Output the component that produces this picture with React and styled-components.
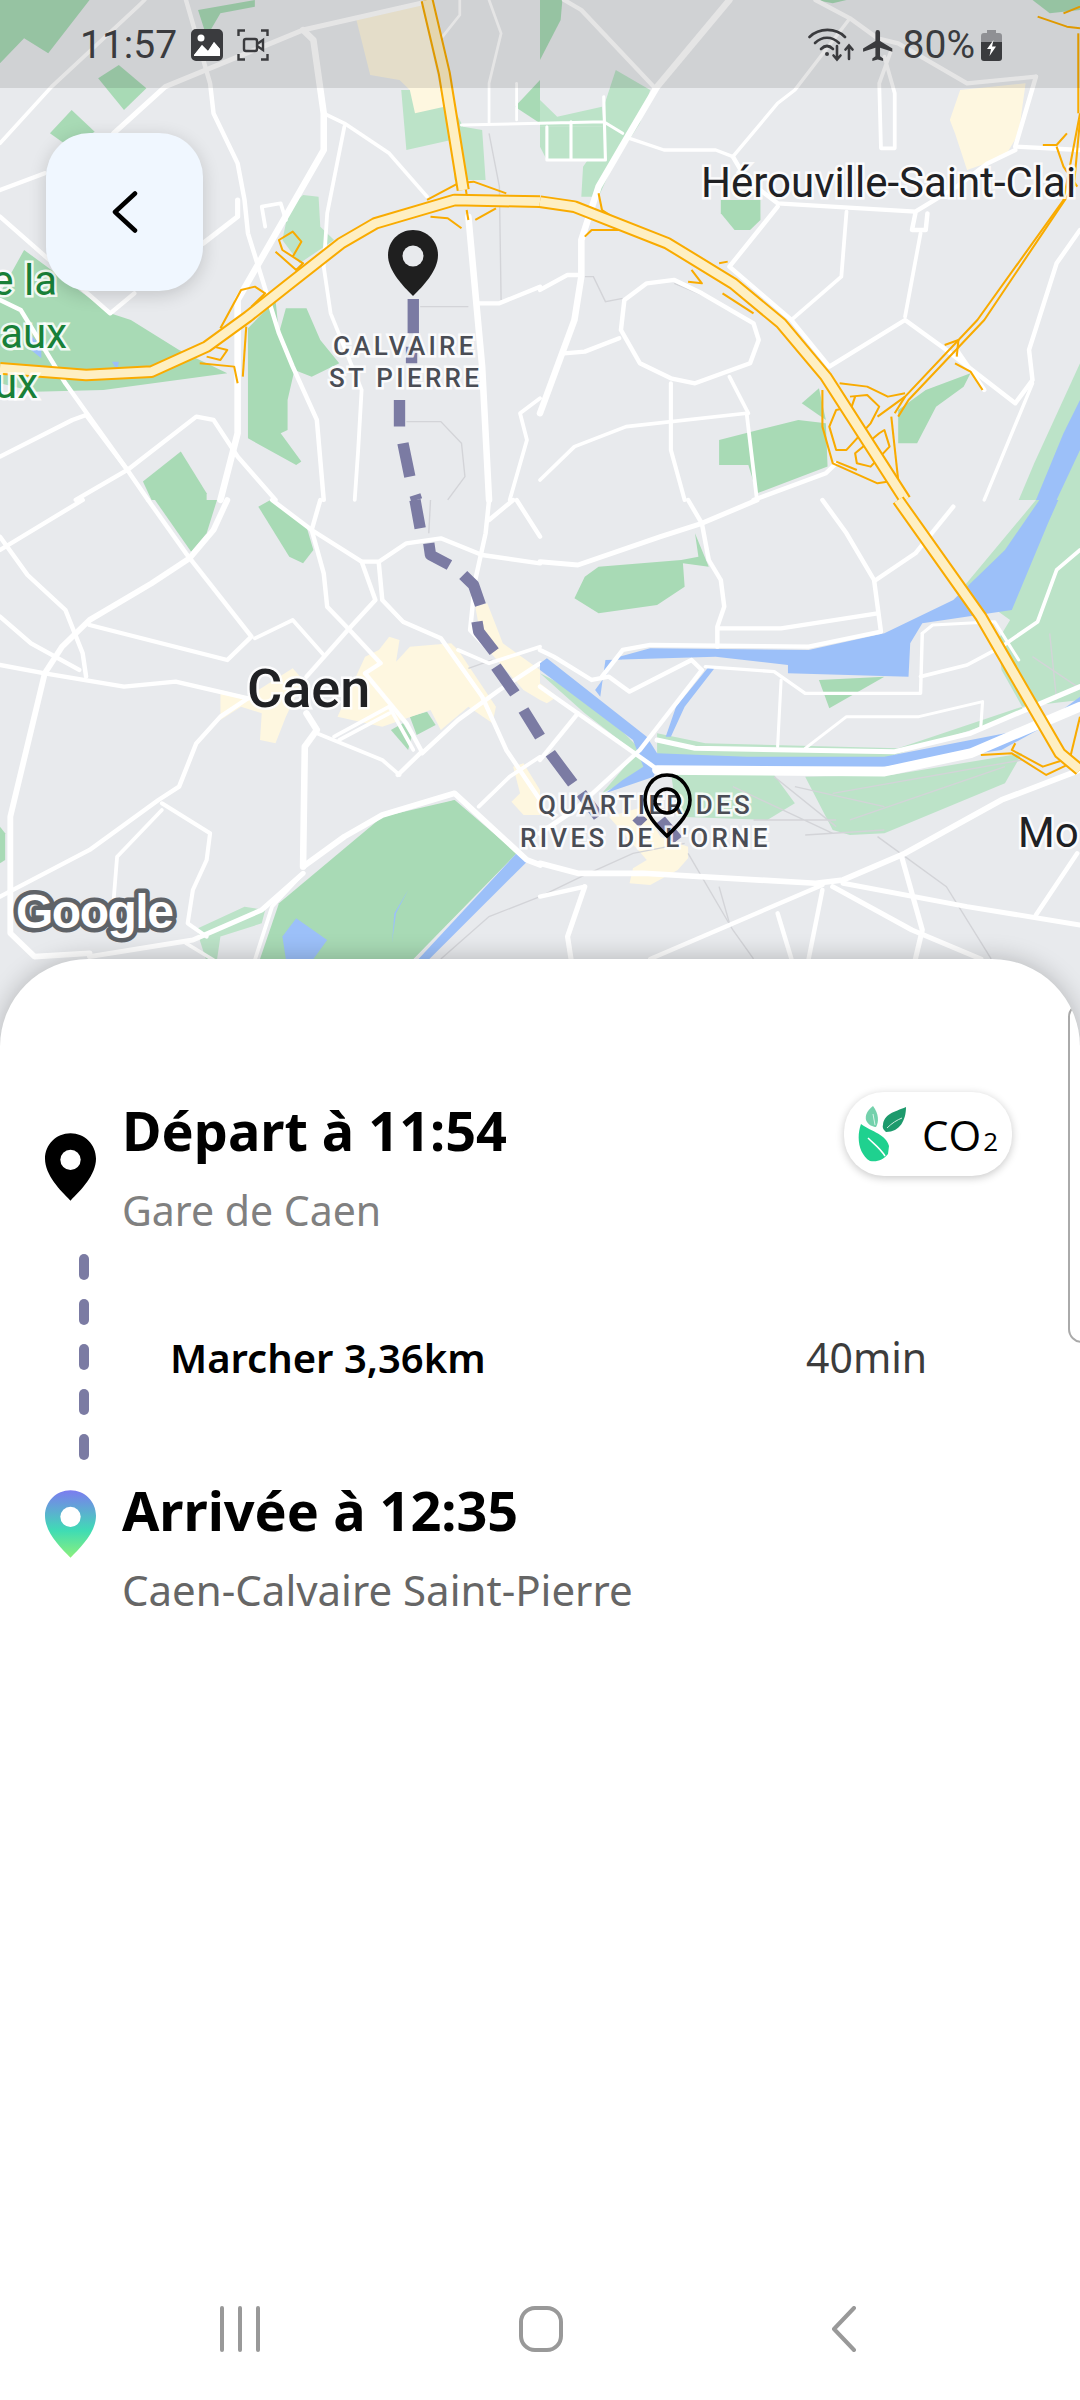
import React from 'react'
import styled, { createGlobalStyle } from 'styled-components'

const GlobalStyle = createGlobalStyle`
  html, body {
    margin: 0;
    padding: 0;
    background: #fff;
    font-family: "Noto Sans", "Open Sans", sans-serif;
  }
`

const colorRoute = '#7b7ba3'
const colorGreen = '#a8dab5'
const colorGreenLight = '#bce3c8'
const colorWater = '#9cc0f9'
const colorUrban = '#fef7e0'
const colorLand = '#e8eaed'

const Page = styled.div`
  width: 1080px;
  height: 2400px;
  position: relative;
  display: flex;
  flex-direction: column;
  overflow: hidden;
  background: #fff;
`

const MapArea = styled.div`
  position: relative;
  height: 1045px;
  flex: none;
  overflow: hidden;
  background: ${colorLand};
`

const MapSvg = styled.svg`
  display: block;
`

const StatusBar = styled.div`
  position: absolute;
  top: 0;
  left: 0;
  right: 0;
  height: 88px;
  box-sizing: border-box;
  padding: 0 78px 0 80px;
  display: flex;
  align-items: center;
  justify-content: space-between;
  background: rgba(0, 0, 0, 0.1);
  color: #3a3b3e;
  font-family: "Roboto", sans-serif;
  font-size: 39px;
`

const StatusGroup = styled.div`
  display: flex;
  align-items: center;
  gap: ${p => p.$gap}px;
  margin-top: 2px;
`

const BackButton = styled.div`
  position: absolute;
  top: 133px;
  left: 46px;
  width: 157px;
  height: 158px;
  border-radius: 44px;
  background: #f0f7ff;
  box-shadow: 0 4px 18px rgba(0, 0, 0, 0.16);
  display: flex;
  align-items: center;
  justify-content: center;
`

const Panel = styled.div`
  position: relative;
  margin-top: -86px;
  height: 1441px;
  flex: none;
  box-sizing: border-box;
  padding: 0 0 0 45px;
  background: #fff;
  border-radius: 88px 88px 0 0;
  box-shadow: 0 -1px 24px rgba(0, 0, 0, 0.22);
  display: flex;
  overflow: hidden;
`

const Journey = styled.div`
  width: 967px;
  padding-top: 138px;
  flex: none;
  display: flex;
  flex-direction: column;
`

const StopRow = styled.div`
  display: flex;
  gap: 26px;
  height: ${p => p.$height}px;
`

const PinSlot = styled.div`
  width: 51px;
  flex: none;
  padding-top: ${p => p.$top}px;
`

const StopTitle = styled.div`
  font-size: 54px;
  font-weight: 700;
  line-height: 66px;
  color: #000;
`

const StopPlace = styled.div`
  margin-top: 22px;
  font-size: ${p => p.$size}px;
  line-height: 50px;
  color: ${p => p.$color};
`

const WalkRow = styled.div`
  display: flex;
  align-items: center;
  height: 210px;
  margin-bottom: 11px;
`

const Dashes = styled.div`
  width: 10px;
  margin-left: 34px;
  margin-bottom: 8px;
  flex: none;
  display: flex;
  flex-direction: column;
  gap: 19px;
`

const Dash = styled.div`
  height: 26px;
  border-radius: 5px;
  background: ${colorRoute};
`

const WalkLabel = styled.div`
  margin-left: 81px;
  padding-bottom: 8px;
  width: 636px;
  font-size: 40px;
  font-weight: 600;
  color: #000;
  flex: none;
`

const WalkTime = styled.div`
  padding-bottom: 8px;
  font-size: 41px;
  color: #3c3c3c;
`

const Co2Badge = styled.div`
  position: absolute;
  top: 133px;
  left: 844px;
  width: 168px;
  height: 84px;
  box-sizing: border-box;
  padding-left: 14px;
  border-radius: 40px;
  background: #fff;
  box-shadow: 0 2px 9px rgba(0, 0, 0, 0.22);
  display: flex;
  align-items: center;
  font-family: "Open Sans", sans-serif;
  font-size: 42px;
  color: #000;
`

const Co2Text = styled.span`
  margin-left: 14px;
`

const Co2Sub = styled.span`
  font-size: 26px;
  margin-left: 2px;
`

const NextCard = styled.div`
  width: 60px;
  height: 340px;
  margin-top: 44px;
  margin-left: 56px;
  flex: none;
  box-sizing: border-box;
  border: 2px solid #aaa;
  border-radius: 14px;
`

const NavBar = styled.div`
  position: absolute;
  left: 0;
  right: 0;
  bottom: 48px;
  height: 46px;
`

const NavIcon = styled.svg`
  position: absolute;
  left: ${p => p.$left}px;
  top: 0;
`

// roads, parks etc. are traced per quarter of the map, in the coordinates of a 3x crop
const quarters = [
  {
    at: [0, 0],
    green: [
      'M0 0 L260 0 L140 160 L70 115 L0 190Z',
      'M575 30 L740 0 L740 20 L640 40 L600 110Z',
      'M285 235 L345 195 L425 265 L360 330Z',
      'M145 400 L208 330 L275 395 L200 440Z',
      'M0 880 L70 750 L320 940 L380 960 L520 1050 L660 1120 L300 1170 L100 1175 L0 1150Z',
      'M720 985 L800 900 L810 1000 L830 925 L890 925 L930 1020 L985 1090 L905 1130 L855 1110 L835 1200 L835 1290 L815 1300 L875 1385 L860 1395 L720 1315Z',
      'M415 1445 L525 1355 L600 1480 L600 1500 L440 1500Z',
      'M1495 320 L1568 240 L1568 370Z',
    ],
    light: [
      'M840 620 L880 585 L925 590 L930 680 L970 720 L870 790 L820 720Z',
      'M1165 270 L1180 450 L1310 420 L1320 540 L1410 540 L1400 390 L1345 380 L1290 270Z',
    ],
    water: ['M85 1000 L120 1040 L120 1075 L90 1050Z', 'M325 1085 L345 1085 L340 1110Z'],
    urban: ['M1035 60 L1225 15 L1290 320 L1205 340 L1190 270 L1160 240 L1075 225Z'],
    grey: [
      'M1220 920 L1360 920',
      'M1180 1265 L1280 1265 L1340 1330 L1350 1430 L1300 1500',
      'M1420 400 L1450 560 L1455 900',
    ],
    roads: [
      [10, 'M540 0 L610 250 L620 340 L690 490 L710 600 L720 700 L810 1000 L850 1100 L920 1260 L940 1500'],
      [8, 'M1000 380 L950 640 L940 800 L960 940 L1050 1170 L1040 1350 L1030 1500'],
      [12, 'M1220 10 L880 90 L480 260 L330 400'],
      [16, 'M880 90 L910 120 L940 340 L940 450 L690 900 L690 1300 L640 1500'],
      [8, 'M940 340 L1000 370 L1130 460 L1240 590'],
      [8, 'M0 430 L150 260 L400 20 L420 0'],
      [10, 'M0 570 L130 520'],
      [12, 'M590 730 L690 650 L690 600'],
      [10, 'M0 650 L320 940 L390 880'],
      [10, 'M0 900 L60 930 L190 1150 L370 1410 L430 1500'],
      [10, 'M0 1370 L210 1260 L250 1245 L370 1410'],
      [10, 'M220 1500 L370 1410 L570 1250 L620 1260 L690 1370 L800 1500'],
      [8, 'M770 680 L760 620 L815 610 L830 660'],
      [16, 'M1360 650 L1400 1100 L1420 1500'],
      [10, 'M1390 910 L1450 910 L1568 860'],
      [8, 'M1568 1195 L1510 1240 L1530 1320 L1480 1500'],
      [6, 'M1340 375 L1568 370'],
      [5, 'M1420 0 L1455 100 L1420 250 L1420 370'],
      [5, 'M1335 0 L1335 45 L1285 110'],
      [5, 'M1500 250 L1500 360'],
    ],
    ramps: [
      'M800 755 L860 810 L880 790 L820 750 L810 720 L850 695 L875 725 L850 770',
      'M640 985 L700 870 L740 860 L770 880 L730 920',
      'M580 1090 L680 1100 L690 1150 M600 1070 L640 1080 L660 1050 L620 1040',
      'M705 1130 L715 980',
      'M1240 600 L1330 550 L1375 545 L1470 580',
      'M1250 650 L1300 655 L1340 685 M1380 660 L1440 625',
      'M1350 550 L1355 585 M1355 630 L1360 660',
    ],
    highway: [
      'M0 1105 L250 1125 L440 1115 L600 1040 L720 950 L830 860 L990 730 L1090 670 L1320 600 L1568 605',
      'M1240 0 L1290 220 L1345 570',
    ],
  },
  {
    at: [540, 0],
    green: [
      'M0 0 L65 0 L60 60 L0 180Z',
      'M525 600 L640 600 L640 660 L610 690 L565 690 L525 640Z',
      'M520 1320 L750 1260 L830 1270 L835 1400 L630 1480 L605 1395 L520 1395Z',
      'M760 1210 L810 1165 L830 1260Z',
      'M1040 1230 L1120 1170 L1250 1120 L1230 1160 L1150 1220 L1095 1330 L1040 1330Z',
      'M1430 0 L1568 0 L1568 30 L1480 40Z',
      'M800 0 L890 0 L850 10Z',
    ],
    light: [
      'M220 210 L320 270 L290 370 L210 500 L170 590 L120 590 L125 500 L180 420 L185 320Z',
      'M0 300 L50 350 L180 320 L185 380 L0 380Z',
      'M0 380 L190 380 L190 480 L20 480 L0 440Z',
      'M1568 1090 L1568 1500 L1390 1500 L1435 1390Z',
    ],
    water: ['M1568 1200 L1568 1350 L1500 1500 L1440 1500 L1520 1300Z'],
    urban: ['M1220 270 L1410 250 L1390 400 L1350 470 L1240 510 L1205 400 L1190 360Z'],
    grey: ['M130 830 L155 830 L190 905 L240 895', 'M390 850 L470 885'],
    roads: [
      [10, 'M70 0 L120 30 L330 260'],
      [16, 'M550 0 L340 260 L260 400 L170 560 L120 720 L120 830 L100 960 L0 1240'],
      [10, 'M800 0 L900 55 L980 115 L1040 130 L1240 250 L1440 230'],
      [7, 'M900 55 L740 270 L690 310 L560 470 L510 450 L360 450 L260 415'],
      [8, 'M1020 150 L985 250 L990 445 L1030 445 L1030 280 L1000 170'],
      [10, 'M1440 230 L1380 440 L1568 450'],
      [10, 'M560 470 L600 540 L690 610 L1090 635 L1210 560 L1300 490 L1380 450'],
      [10, 'M1090 640 L1080 690 L1120 690 L1125 640'],
      [10, 'M690 620 L550 800 L730 960 L840 1100 L1060 960 L1180 1050 L1380 1210 L1430 1140 L1420 1050 L1500 790 L1568 690'],
      [8, 'M890 635 L875 830 L730 960'],
      [8, 'M1105 700 L1060 950'],
      [10, 'M0 870 L80 825 L120 825'],
      [10, 'M70 1060 L130 1055 L230 1015'],
      [8, 'M0 1440 L100 1340 L250 1280 L600 1240 L630 1500'],
      [9, 'M380 1150 L380 1350 L420 1500'],
      [8, 'M550 1130 L605 1240'],
      [10, 'M470 880 L520 910 L620 970 L635 1020 L610 1090 L450 1150 L380 1135 L290 1090 L235 990 L245 900 L310 850 L390 840 L470 880'],
      [10, 'M620 1500 L830 1420 L860 1390'],
      [6, 'M20 380 L20 480 L190 480 L185 290 M90 365 L90 480 M0 370 L185 365 L240 400'],
      [10, 'M1210 1050 L1290 1170'],
      [7, 'M1290 1500 L1430 1150'],
    ],
    ramps: [
      'M170 580 L180 630 L240 670 M130 710 L150 690 L230 690',
      'M430 845 L470 850 L440 810 M520 790 L545 785',
      'M530 880 L620 940',
      'M820 1170 L820 1280 L850 1390 L980 1450 L1040 1440',
      'M870 1150 L950 1160 L1010 1190 L1060 1180',
      'M900 1190 L950 1185 L985 1220 L960 1270 L890 1350 L860 1350 L840 1280 L860 1230 L905 1220 L915 1190',
      'M985 1300 L1000 1290 L1015 1340 L960 1400 L920 1390 L915 1360 L985 1300',
      'M860 1385 L920 1410 M980 1250 L1060 1190',
      'M1020 1250 L1040 1440',
      'M1205 1090 L1250 1115 L1285 1170 M1175 1035 L1215 1020 L1210 1070',
      'M1460 435 L1500 435 L1530 400 M1500 440 L1520 500 L1560 560',
      'M1445 50 L1530 80 L1568 85 M1520 40 L1568 20',
    ],
    highway: [
      'M0 605 L100 620 L370 730 L560 850 L700 970 L830 1130 L1060 1500',
    ],
    thinHighway: [
      'M1568 340 L1520 600 L1270 960 L1060 1190 L1030 1240',
      'M1568 360 L1550 560 L1290 960 L1070 1200 L1040 1250',
      'M1563 100 L1563 340',
    ],
  },
  {
    at: [0, 500],
    green: [
      'M450 0 L630 0 L600 100 L555 155Z',
      'M750 20 L785 0 L890 80 L910 150 L880 190 L840 170Z',
      'M810 1210 L1110 950 L1320 900 L1500 1060 L1200 1377 L755 1377Z',
      'M0 980 L15 1000 L15 1080 L0 1090Z',
      'M1135 690 L1170 670 L1195 710 L1185 750Z',
      'M1190 650 L1240 635 L1265 675 L1210 705Z',
    ],
    light: [
      'M575 1285 L710 1220 L770 1230 L760 1270 L640 1310 L620 1450 L580 1320Z',
      'M800 1190 L860 1135 L790 1200Z',
      'M1225 930 L1320 900 L1500 1060 L1200 1377 L1180 1377 L1400 1130 L1410 1010 L1340 940 L1280 925Z',
    ],
    water: [
      'M820 1310 L860 1255 L950 1320 L910 1377 L830 1377Z',
      'M1195 1400 L1500 1060 L1530 1085 L1225 1400Z',
      'M1185 1170 L1150 1240 L1138 1330 L1145 1240Z',
    ],
    urban: [
      'M640 570 L720 590 L850 505 L880 540 L830 650 L800 730 L755 720 L760 640 L700 620 L640 660Z',
      'M980 650 L1060 470 L1100 450 L1130 410 L1160 420 L1150 485 L1190 440 L1310 430 L1330 450 L1440 620 L1430 670 L1360 620 L1280 690 L1250 630 L1110 680Z',
      'M1380 320 L1415 310 L1460 430 L1568 510 L1568 600 L1520 570 L1400 430Z',
      'M1490 800 L1520 790 L1568 870 L1568 945 L1520 945 L1485 905 L1510 880Z',
    ],
    grey: ['M1250 0 L1245 100', 'M1360 505 L1430 480', 'M1280 1377 L1420 1250 L1568 1190'],
    roads: [
      [10, 'M0 150 L240 0'],
      [10, 'M430 0 L540 160 L730 410 L660 480 L260 375'],
      [14, 'M660 0 L620 90 L550 175 L440 250 L260 360 L180 440 L130 520 L30 950 L30 1300 L100 1370 L260 1360'],
      [10, 'M0 110 L80 225 L190 330 L240 460 L250 530'],
      [10, 'M0 350 L90 430 L230 510'],
      [10, 'M0 495 L130 520 L360 560 L510 545 L720 595'],
      [10, 'M720 595 L640 650 L570 730 L520 860 L460 900 L260 1050 L0 1190'],
      [9, 'M470 910 L610 1000 L600 1080 L560 1170 L545 1270 L600 1310'],
      [8, 'M470 930 L340 1070 L330 1200'],
      [10, 'M790 0 L905 90 L1050 185 L1100 185 L1180 130 L1280 115 L1400 165 L1568 190'],
      [10, 'M930 0 L905 90 L940 220 L950 320 L1015 390 L1105 490 L1060 520 L1180 670 L1225 755 L1155 825'],
      [10, 'M1050 185 L1090 300 L1010 390 L890 530'],
      [10, 'M1100 190 L1110 300 L1170 365 L1280 415 L1400 590 L1470 750 L1568 900'],
      [8, 'M740 415 L850 360 L940 465'],
      [16, 'M890 640 L920 690 L885 740 L880 1100'],
      [8, 'M920 700 L1110 780 L1160 825'],
      [8, 'M970 710 L1130 620 L1200 750 M985 720 L1130 640'],
      [10, 'M1225 760 L1330 660 L1450 570 L1568 490'],
      [10, 'M1420 0 L1410 100 L1380 240 L1365 390 L1420 450 M1420 60 L1490 0 M1500 0 L1568 110'],
      [14, 'M880 1100 L1000 1010 L1110 945 L1320 880 L1530 1080 L1568 1095'],
      [8, 'M740 1380 L790 1220 L880 1120'],
      [12, 'M260 1370 L560 1320 L760 1230 L880 1120'],
      [8, 'M540 1330 L620 1380'],
      [8, 'M1390 920 L1480 830 L1568 770'],
      [8, 'M1330 450 L1420 490 L1568 440'],
    ],
  },
  {
    at: [540, 500],
    green: [
      'M100 295 L130 230 L170 200 L410 180 L460 170 L450 100 L490 200 L415 190 L420 260 L340 315 L170 340Z',
      'M810 540 L1000 530 L840 625Z',
    ],
    light: [
      'M1230 260 L1440 0 L1568 0 L1568 600 L1400 620 L1340 510 L1330 420 L1365 360Z',
      'M380 820 L680 825 L740 910 L660 960 L400 950Z',
      'M770 830 L1020 825 L1400 760 L1350 850 L1000 1000 L900 1005 L850 990Z',
      'M0 520 L150 600 L340 800 L180 880 L280 760 L130 640Z',
      'M340 700 L480 730 L1040 745 L1400 620 L1400 640 L1000 775 L340 770Z',
    ],
    water: [
      'M0 490 L20 475 L310 710 L340 760 L600 770 L1000 770 L1450 680 L1568 590 L1568 620 L1340 750 L1000 800 L340 800 L330 830 L190 880 L240 840 L300 800 L270 720 L0 510Z',
      'M160 570 L230 470 L320 445 L780 450 L1000 400 L1200 300 L1350 150 L1450 0 L1505 0 L1475 70 L1370 330 L1110 370 L1075 430 L1070 530 L720 520 L720 495 L510 470 L190 480 L175 590Z',
      'M510 500 L420 620 L380 710 L365 710 L395 620 L490 500Z',
    ],
    urban: [
      'M0 550 L50 590 L20 610 L0 600Z',
      'M200 950 L300 920 L350 1010 L430 1040 L430 1075 L400 1110 L320 1155 L260 1150 L270 1105 L310 1080Z',
    ],
    grey: [
      'M980 1010 L1180 1160 L1310 1377',
      'M430 1060 L560 1290 L620 1377',
      'M520 1160 L550 1270',
      'M560 860 L850 1000 M680 830 L860 980 M740 860 L1000 920 M620 960 L860 960 M770 1005 L1000 990 M850 880 L1400 780 M900 960 L1350 800',
      'M0 1190 L120 1130 L270 1060 L420 1030',
      'M1480 400 L1500 600 M1430 470 L1560 560',
    ],
    roads: [
      [14, 'M0 1090 L110 1120 L300 1120 L800 1150 L880 1140 L1060 1060 L1340 900 L1568 810'],
      [12, 'M880 1150 L1240 1220 L1568 1275'],
      [12, 'M850 1160 L1080 1290 L1280 1377'],
      [10, 'M320 1377 L820 1155'],
      [10, 'M820 1170 L780 1377'],
      [10, 'M690 1240 L730 1377'],
      [12, 'M1050 1070 L1110 1290 L1090 1377'],
      [12, 'M130 1160 L80 1310 L90 1377'],
      [10, 'M0 1190 L130 1160'],
      [10, 'M0 450 L40 470 L150 540 L200 530 L260 575 L440 480 L470 510 L290 750 L100 930'],
      [10, 'M0 560 L330 800'],
      [10, 'M110 640 L0 780'],
      [10, 'M430 0 L470 70 L490 180 L525 240 L535 320 L515 380 L515 440'],
      [12, 'M0 185 L110 195 L350 110 L470 70 L630 0'],
      [10, 'M520 385 L700 385 L980 340'],
      [10, 'M820 0 L890 100 L970 240 L990 395 L780 440 L320 435 L240 450 L180 530'],
      [10, 'M975 240 L1090 160 L1200 20'],
      [7, 'M1110 400 L1105 580 L770 580 L680 515 L480 500'],
      [6, 'M700 540 L690 740'],
      [8, 'M1105 530 L1240 495 L1340 440 L1445 365 L1500 210 L1568 150'],
      [6, 'M770 745 L890 650 L1100 650 L1285 605 L1280 680'],
      [6, 'M1110 400 L1140 375 L1320 365 L1390 480'],
      [12, 'M340 720 L450 745 L1030 755 L1250 700 L1568 560'],
      [26, 'M340 810 L1000 815 L1250 760 L1568 620'],
      [10, 'M1440 1245 L1560 1060'],
      [12, 'M100 930 L0 1000'],
    ],
    ramps: [
      'M1280 765 L1370 760 L1470 825 L1540 790',
      'M1380 730 L1370 750 L1460 800 L1520 780',
      'M1540 770 L1568 650',
    ],
    highway: ['M1040 0 L1280 350 L1510 760 L1568 810'],
  },
]

// route dashes of the walk, same coordinates
const routes = [
  { at: [0, 0], d: 'M1200 897 L1200 1000 M1195 1040 L1195 1090 M1160 1200 L1160 1280 M1170 1330 L1190 1430 M1205 1485 L1210 1500' },
  { at: [0, 500], d: 'M1205 0 L1220 85 M1245 130 L1250 165 L1305 195 M1345 225 L1375 255 L1395 315 M1385 365 L1390 395 L1435 455 M1440 500 L1495 580 M1520 630 L1568 710' },
  { at: [540, 500], d: 'M30 760 L95 850 M120 880 L170 950 M280 950 L300 970 M350 960 L400 1020' },
]

const quarterTransform = at => `translate(${at[0]} ${at[1]}) scale(0.3444 0.3333)`

const Paths = ({ list, fill }) => list.map(d => <path key={d} d={d} fill={fill} />)

const MapLabel = styled.text`
  font-family: "Roboto", sans-serif;
  font-size: ${p => p.$size}px;
  font-weight: ${p => p.$weight || 400};
  letter-spacing: ${p => p.$spacing || 0}px;
  fill: ${p => p.$color};
  stroke: rgba(255, 255, 255, 0.85);
  stroke-width: 5px;
  paint-order: stroke;
`

const GoogleMark = styled.text`
  font-family: "Liberation Sans", sans-serif;
  font-size: 48px;
  font-weight: 700;
  letter-spacing: -1.5px;
  fill: #fff;
  stroke: #5f6368;
  stroke-width: 9px;
  stroke-linejoin: round;
  paint-order: stroke;
`

const PIN = 'M25 0C11 0 0 11 0 25C0 41 15 56 25 66C35 56 50 41 50 25C50 11 39 0 25 0Z'

const MapDrawing = () => (
  <MapSvg width="1080" height="1045" viewBox="0 0 1080 1045">
    {quarters.map(q => (
      <g key={q.at.join()} transform={quarterTransform(q.at)}>
        <Paths list={q.light} fill={colorGreenLight} />
        <Paths list={q.green} fill={colorGreen} />
        <Paths list={q.water} fill={colorWater} />
        <Paths list={q.urban} fill={colorUrban} />
        <g fill="none" stroke="#d3d4d8" strokeWidth="4">
          {q.grey.map(d => <path key={d} d={d} />)}
        </g>
        <g fill="none" stroke="#fff" strokeLinejoin="round" strokeLinecap="round">
          {q.roads.map(([w, d]) => <path key={d} d={d} strokeWidth={w + 3} />)}
        </g>
        <g fill="none" stroke="#f9ab00" strokeWidth="6" strokeLinejoin="round">
          {(q.ramps || []).map(d => <path key={d} d={d} />)}
          {(q.thinHighway || []).map(d => <path key={d} d={d} />)}
        </g>
        <g fill="none" strokeLinejoin="round">
          {(q.highway || []).map(d => <path key={d} d={d} stroke="#f9ab00" strokeWidth="38" />)}
          {(q.highway || []).map(d => <path key={d} d={d} stroke="#feefc3" strokeWidth="26" />)}
        </g>
      </g>
    ))}
    {routes.map(r => (
      <path key={r.d} d={r.d} transform={quarterTransform(r.at)} fill="none" stroke={colorRoute} strokeWidth="33" strokeLinejoin="round" />
    ))}

    <MapLabel x="57" y="295" textAnchor="end" $size={42} $color="#188038">e la</MapLabel>
    <MapLabel x="67" y="348" textAnchor="end" $size={42} $color="#188038">aux</MapLabel>
    <MapLabel x="38" y="398" textAnchor="end" $size={42} $color="#188038">ux</MapLabel>
    <MapLabel x="701" y="197" $size={42} $color="#202124">Hérouville-Saint-Clai</MapLabel>
    <MapLabel x="247" y="707" $size={54} $weight={500} $color="#202124">Caen</MapLabel>
    <MapLabel x="1018" y="847" $size={42} $color="#202124">Mo</MapLabel>
    <MapLabel x="333" y="355" $size={26} $weight={500} $spacing={3.3} $color="#4a4d55">CALVAIRE</MapLabel>
    <MapLabel x="329" y="387" $size={26} $weight={500} $spacing={3.3} $color="#4a4d55">ST PIERRE</MapLabel>
    <MapLabel x="538" y="814" $size={26} $weight={500} $spacing={3.3} $color="#4a4d55">QUARTIER DES</MapLabel>
    <MapLabel x="520" y="847" $size={26} $weight={500} $spacing={3.3} $color="#4a4d55">RIVES DE L'ORNE</MapLabel>

    <path d={PIN} transform="translate(388 230)" fill="#1f1f1f" />
    <circle cx="413" cy="256" r="10.5" fill={colorLand} />
    <path d="M667 775C651 775 645 790 645 800C645 815 658 827 667 836C676 827 690 815 690 800C690 790 683 775 667 775Z" fill="none" stroke="#000" strokeWidth="3.6" />
    <circle cx="667" cy="801" r="12" fill="none" stroke="#000" strokeWidth="3.6" />

    <GoogleMark x="16" y="928">Google</GoogleMark>
  </MapSvg>
)

const GalleryIcon = () => (
  <svg width="32" height="32" viewBox="0 0 32 32">
    <path fillRule="evenodd" d="M5 0H27A5 5 0 0 1 32 5V27A5 5 0 0 1 27 32H5A5 5 0 0 1 0 27V5A5 5 0 0 1 5 0ZM3 26L11 16L17 22L23 13L29 20V27H3Z" fill="#3a3b3e" />
    <path d="M3 26L11 16L17 22L23 13L29 20V27H3Z" fill="#fff" />
    <circle cx="10" cy="9" r="3.5" fill="#fff" />
  </svg>
)

const ScreenRecordIcon = () => (
  <svg width="32" height="32" viewBox="0 0 32 32" fill="none" stroke="#3a3b3e" strokeWidth="2.4">
    <path d="M1.5 7V1.5H8M24 1.5H30.5V7M30.5 25V30.5H24M8 30.5H1.5V25" />
    <rect x="7" y="10" width="13" height="12" rx="2" />
    <path d="M20 15L26 11V21L20 17" />
  </svg>
)

const WifiIcon = () => (
  <svg width="46" height="34" viewBox="0 0 46 34" fill="none" stroke="#3a3b3e" strokeWidth="2.6" strokeLinecap="round">
    <path d="M1.5 9C11 -0.5 28 -0.5 37 9" />
    <path d="M7 15C14 8 24 8 31 15" />
    <path d="M13 21C17 17 21 17 25 21" />
    <circle cx="19" cy="26" r="2" fill="#3a3b3e" stroke="none" />
    <path d="M29 18V31M25.5 27.5L29 31.500L32.5 27.5" />
    <path d="M41 31V18M37.5 21.5L41 17.5L44.5 21.5" />
  </svg>
)

const PlaneIcon = () => (
  <svg width="37" height="37" viewBox="0 0 24 24">
    <path d="M21 16v-2l-8-5V3.500a1.500 1.500 0 0 0-3 0V9l-8 5v2l8-2.500V19l-2 1.500V22l3.500-1 3.500 1v-1.500L13 19v-5.500z" fill="#3a3b3e" />
  </svg>
)

const BatteryIcon = () => (
  <svg width="21" height="31" viewBox="0 0 21 31">
    <path d="M6 0H15V3H18A3 3 0 0 1 21 6V14H0V6A3 3 0 0 1 3 3H6Z" fill="#8f9094" />
    <path d="M0 12H21V28A3 3 0 0 1 18 31H3A3 3 0 0 1 0 28Z" fill="#3a3b3e" />
    <path d="M12.500 10L6 19H10L8.500 26L15 16.500H11Z" fill="#fff" />
  </svg>
)

const Leaves = () => (
  <svg width="50" height="57" viewBox="0 0 50 57">
    <path d="M3 18C-2 32 1 48 12 55C20 56 25 54 30 48L31 40C28 28 14 26 3 18Z" fill="#1fd18f" />
    <path d="M10 32C16 38 22 42 27 50" fill="none" stroke="#fff" strokeWidth="1.500" />
    <path d="M48 1C36 6 26 8 25 19C24 22 26 24 28 26C42 26 48 14 48 1Z" fill="#1d9a6c" />
    <path d="M29 22C34 17 39 14 44 12" fill="none" stroke="#cdeee0" strokeWidth="1" />
    <path d="M15 0C9 5 7 9 8 14C10 19 15 21 18 21C21 16 21 8 15 0Z" fill="#74d1ac" />
    <path d="M15 8L17 19" fill="none" stroke="#d8f3e8" strokeWidth="1" />
  </svg>
)

const StopPin = ({ fill }) => (
  <svg width="51" height="68" viewBox="0 0 50 66">
    <path d={PIN} fill={fill} />
    <circle cx="25" cy="26" r="10" fill="#fff" />
  </svg>
)

const App = () => (
  <Page>
    <GlobalStyle />
    <MapArea>
      <MapDrawing />
      <StatusBar>
        <StatusGroup $gap={14}>
          <span>11:57</span>
          <GalleryIcon />
          <ScreenRecordIcon />
        </StatusGroup>
        <StatusGroup $gap={6}>
          <WifiIcon />
          <PlaneIcon />
          <span>80%</span>
          <BatteryIcon />
        </StatusGroup>
      </StatusBar>
      <BackButton>
        <svg width="26" height="42" viewBox="0 0 26 42" fill="none" stroke="#000" strokeWidth="4.500" strokeLinecap="round" strokeLinejoin="round">
          <path d="M23 2.500L3 21L23 39.500" />
        </svg>
      </BackButton>
    </MapArea>
    <Panel>
      <Journey>
        <StopRow $height={159}>
          <PinSlot $top={36}>
            <StopPin fill="#000" />
          </PinSlot>
          <div>
            <StopTitle>Départ à 11:54</StopTitle>
            <StopPlace $color="#808080" $size={41}>Gare de Caen</StopPlace>
          </div>
        </StopRow>
        <WalkRow>
          <Dashes>
            <Dash />
            <Dash />
            <Dash />
            <Dash />
            <Dash />
          </Dashes>
          <WalkLabel>Marcher 3,36km</WalkLabel>
          <WalkTime>40min</WalkTime>
        </WalkRow>
        <StopRow $height={170}>
          <PinSlot $top={13}>
            <StopPin fill="url(#arrivalPin)" />
          </PinSlot>
          <div>
            <StopTitle>Arrivée à 12:35</StopTitle>
            <StopPlace $color="#666" $size={42}>Caen-Calvaire Saint-Pierre</StopPlace>
          </div>
        </StopRow>
        <svg width="0" height="0">
          <defs>
            <linearGradient id="arrivalPin" x1="0" y1="0" x2="0" y2="1">
              <stop offset="0" stopColor="#7c7cf0" />
              <stop offset="0.6" stopColor="#3fdcb4" />
              <stop offset="1" stopColor="#8cf07c" />
            </linearGradient>
          </defs>
        </svg>
      </Journey>
      <NextCard />
      <Co2Badge>
        <Leaves />
        <Co2Text>CO<Co2Sub>2</Co2Sub></Co2Text>
      </Co2Badge>
    </Panel>
    <NavBar>
      <NavIcon $left={218} width="48" height="46" viewBox="0 0 48 46" fill="none" stroke="#999" strokeWidth="4" strokeLinecap="round">
        <path d="M4 2V44M22 2V44M40 2V44" />
      </NavIcon>
      <NavIcon $left={518} width="46" height="46" viewBox="0 0 46 46" fill="none" stroke="#999" strokeWidth="4">
        <rect x="3" y="2" width="40" height="42" rx="14" />
      </NavIcon>
      <NavIcon $left={830} width="28" height="46" viewBox="0 0 28 46" fill="none" stroke="#999" strokeWidth="4" strokeLinecap="round" strokeLinejoin="round">
        <path d="M24 2L4 23L24 44" />
      </NavIcon>
    </NavBar>
  </Page>
)

export default App
